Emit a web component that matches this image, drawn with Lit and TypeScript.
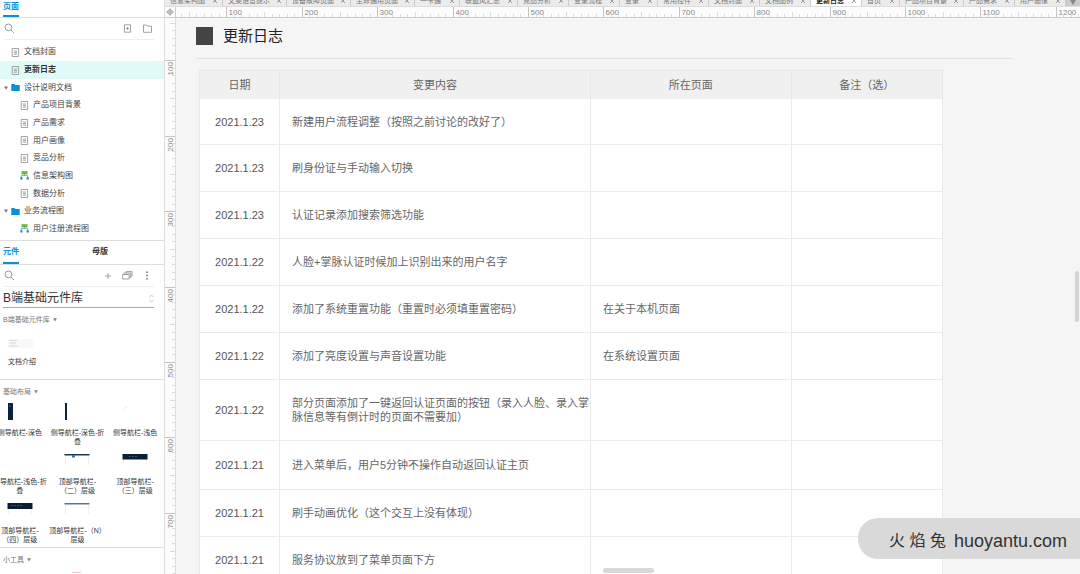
import { LitElement, html, svg, css } from "lit";
import { customElement, property, state } from "lit/decorators.js";
import { classMap } from "lit/directives/class-map.js";
import { styleMap } from "lit/directives/style-map.js";

const fontStack = css`"Liberation Sans", "Noto Sans CJK SC", sans-serif`;

const reset = css`
  *, *::before, *::after { box-sizing: border-box; }
  button, select, input {
    margin: 0; padding: 0; border: 0; background: none; color: inherit;
    font: inherit; appearance: none; text-align: left;
  }
  svg { display: block; flex: none; }
`;

const searchIcon = html`<svg width="11" height="11" viewBox="0 0 11 11" fill="none" stroke="#999" stroke-width="1"><circle cx="4.4" cy="4.4" r="3.4"/><path d="M7 7l3 3"/></svg>`;

const pageIcon = svg`<svg width="9" height="9" viewBox="0 0 9 9" fill="none" stroke="#8d8d8d" stroke-width=".8"><path d="M1.2.5h6.4v8H1.200z"/><path d="M2.800 3h3.200M2.800 4.600h3.200M2.800 6.200h3.200"/></svg>`;
const folderIcon = svg`<svg width="9" height="9" viewBox="0 0 9 9" fill="#0b8fdc"><path d="M.3 1h3.200l.9 1h4.300v6H.3z"/></svg>`;
const flowIcon = svg`<svg width="9" height="10" viewBox="0 0 9 10" fill="none"><path d="M1.400 6.500V4.600h6.200v1.900M4.500 3v1.600" stroke="#4b9ed0" stroke-width=".8"/><path d="M1.500.2h6v3.200h-6z" fill="#6fb52c"/><path d="M.3 6.200h2.200v2.200H.3zM6.600 6.200h2.200v2.200H6.600z" fill="#1d87c9"/></svg>`;

type Node = { name: string; kind: "page" | "folder" | "flow"; level: number };
const pages: Node[] = [
  { name: "文档封面", kind: "page", level: 0 },
  { name: "更新日志", kind: "page", level: 0 },
  { name: "设计说明文档", kind: "folder", level: 0 },
  { name: "产品项目背景", kind: "page", level: 1 },
  { name: "产品需求", kind: "page", level: 1 },
  { name: "用户画像", kind: "page", level: 1 },
  { name: "竞品分析", kind: "page", level: 1 },
  { name: "信息架构图", kind: "flow", level: 1 },
  { name: "数据分析", kind: "page", level: 1 },
  { name: "业务流程图", kind: "folder", level: 0 },
  { name: "用户注册流程图", kind: "flow", level: 1 },
];

@customElement("page-panel")
class PagePanel extends LitElement {
  @state() selected = "更新日志";
  static styles = [reset, css`
    :host { display: block; border-bottom: 1px solid #ddd; color: #444; font-size: 8px; }
    .head { height: 18px; padding-left: 3px; border-bottom: 1px solid #ddd; display: flex; }
    .head h2 { margin: 0; height: 17px; font-size: 8px; line-height: 13px; color: #0b8fdc; border-bottom: 2px solid #0b8fdc; }
    .tools { display: flex; align-items: center; height: 22px; margin: 0 10px 0 4px; padding-right: 1px; border-bottom: 1px solid #eee; }
    .tools input { flex: 1; min-width: 0; }
    .tools button { margin-left: 10px; }
    .tree { list-style: none; margin: 0; padding: 3px 0 2px; }
    .tree li { height: 18px; }
    .tree li:nth-child(3n) { height: 17px; }
    .row { display: flex; align-items: center; width: 100%; height: 100%; padding-left: 4px; gap: 4px; line-height: 12px; }
    .row.child { padding-left: 13px; }
    .row.on { background: #e0faf7; font-weight: 700; color: #333; }
    .arrow { width: 3px; height: 12px; display: flex; align-items: center; }
  `];
  render() {
    const icons = { page: pageIcon, folder: folderIcon, flow: flowIcon };
    return html`
      <header class="head"><h2>页面</h2></header>
      <div class="tools">
        ${searchIcon}<input aria-label="搜索页面">
        <button aria-label="添加页面"><svg width="9" height="9" viewBox="0 0 9 9" fill="none" stroke="#999" stroke-width=".9"><path d="M1.500.8h6v7.400h-6zM4.500 3v3M3 4.500h3"/></svg></button>
        <button aria-label="添加文件夹"><svg width="11" height="9" viewBox="0 0 11 9" fill="none" stroke="#999" stroke-width=".9"><path d="M1.500 1h3l1 1.200h4V8.300h-8z"/></svg></button>
      </div>
      <ul class="tree">
        ${pages.map((p) => html`<li>
          <button class=${classMap({ row: true, child: p.level === 1, on: p.name === this.selected })} @click=${() => (this.selected = p.name)}>
            <span class="arrow">${p.kind === "folder" ? html`<svg width="4" height="4" viewBox="0 0 4 4" fill="#777"><path d="M0 .5h4L2 3.800z"/></svg>` : ""}</span>
            ${icons[p.kind]}<span>${p.name}</span>
          </button></li>`)}
      </ul>`;
  }
}

const navy = "#0b2140";
const side = (w: number) => svg`<path d="M1 0h${w}v17H1z" fill=${navy}/>`;
const frame = svg`<path d="M1.500 4v9M24.500 4v9" stroke="#eee" fill="none"/>`;
const thumbs = [
  { name: "侧导航栏-深色", art: svg`${side(5)}<path d="M2 3h2" stroke="#3f5f85"/>` },
  { name: "侧导航栏-深色-折\n叠", art: side(2) },
  { name: "侧导航栏-浅色", art: svg`<path d="M2 4h3M2 6h2" stroke="#eee"/>` },
  { name: "侧导航栏-浅色-折\n叠", art: svg`` },
  { name: "顶部导航栏-\n（二）层级", art: svg`${frame}<path d="M.5 2h25v1.500H.5z" fill="#24364f"/><path d="M8 3h3v2.500H8z" fill="#2c78b5"/>` },
  { name: "顶部导航栏-\n（三）层级", art: svg`${frame}<path d="M.5 2h25v5.500H.5z" fill="#0a1f33"/><path d="M7 4.500h8" stroke="#35536c" stroke-dasharray="2 1"/>` },
  { name: "顶部导航栏-\n（四）层级", art: svg`${frame}<path d="M.5 2h25v6H.5z" fill="#0a1f33"/><path d="M4 4.500h11" stroke="#35536c" stroke-dasharray="2 1"/>` },
  { name: "顶部导航栏-（N）\n层级", art: svg`${frame}<path d="M.5 2h25v1.500H.5z" fill="#5c7391"/>` },
];

@customElement("widget-panel")
class WidgetPanel extends LitElement {
  static styles = [reset, css`
    :host { display: block; color: #333; font-size: 7px; line-height: 9px; }
    .tabs { display: flex; height: 24px; padding-left: 3px; border-bottom: 1px solid #ddd; }
    .tabs button { height: 23px; font-size: 8px; line-height: 22px; font-weight: 700; border-bottom: 2px solid transparent; margin-right: 73px; white-space: nowrap; }
    .tabs .on { color: #0b8fdc; border-color: #0b8fdc; }
    .tools { display: flex; align-items: center; height: 22px; margin: 0 10px 0 4px; padding-right: 3px; border-bottom: 1px solid #eee; }
    .tools input { flex: 1; min-width: 0; }
    .tools button { margin-left: 10px; }
    .lib { display: flex; align-items: center; height: 21px; margin: 0 10px 0 3px; padding-top: 2px; border-bottom: 1px solid #aaa; }
    .lib select { flex: 1; font-size: 12px; line-height: 18px; color: #333; }
    .group { border-bottom: 1px solid #ddd; }
    .group h3 { display: flex; align-items: center; gap: 3px; margin: 0; padding-left: 3px; font-size: 7px; font-weight: 400; line-height: 23px; color: #777; }
    .doc { display: flex; flex-direction: column; gap: 8px; padding: 8px 0 13px 8px; }
    .grid { display: grid; grid-template-columns: repeat(3, 1fr); row-gap: 5px; margin: 0 0 2px -9px; }
    .cell { display: flex; flex-direction: column; align-items: center; gap: 7px; height: 44px; text-align: center; white-space: pre; line-height: 9px; }
    .cell span { display: block; }
    .more { padding-left: 71px; }
  `];
  head(t: string) {
    return html`<h3>${t}<svg width="4" height="4" viewBox="0 0 4 4" fill="#888"><path d="M0 .3h4L2 3.600z"/></svg></h3>`;
  }
  render() {
    return html`
      <nav class="tabs"><button class="on">元件</button><button>母版</button></nav>
      <div class="tools">
        ${searchIcon}<input aria-label="搜索元件">
        <button aria-label="添加"><svg width="8" height="8" viewBox="0 0 8 8" stroke="#999"><path d="M4 1v6M1 4h6" stroke-width=".9"/></svg></button>
        <button aria-label="元件库"><svg width="11" height="9" viewBox="0 0 11 9" fill="none" stroke="#888" stroke-width=".8"><path d="M.7 3.500h6.500v4.500H.7zM2.300 3.500V2h6.500v4.500H7.200M4 2V.6h6V5H8.800"/></svg></button>
        <button aria-label="更多"><svg width="8" height="9" viewBox="0 0 8 9" fill="#777"><circle cx="4" cy="1.200" r=".9"/><circle cx="4" cy="4.500" r=".9"/><circle cx="4" cy="7.800" r=".9"/></svg></button>
      </div>
      <div class="lib">
        <select aria-label="选择元件库"><option>B端基础元件库</option></select>
        <svg width="5" height="9" viewBox="0 0 5 9" fill="none" stroke="#bbb" stroke-width=".8"><path d="M.5 3L2.500 1l2 2M.5 6l2 2 2-2"/></svg>
      </div>
      <section class="group">
        ${this.head("B端基础元件库")}
        <div class="doc">
          <svg width="26" height="10" viewBox="0 0 26 10"><path d="M0 0h25v9H0z" fill="#f8f8f8"/><path d="M1 1.500h8M2 4h6M1 7h9" stroke="#d9d9d9"/></svg>
          <span>文档介绍</span>
        </div>
      </section>
      <section class="group">
        ${this.head("基础布局")}
        <div class="grid">
          ${thumbs.map((t) => html`<div class="cell"><svg width="26" height="18" viewBox="0 0 26 18">${t.art}</svg><span>${t.name}</span></div>`)}
        </div>
      </section>
      <section class="group">
        ${this.head("小工具")}
        <div class="more"><svg width="12" height="6" viewBox="0 0 12 6"><path d="M1 1.500h9" stroke="#f0c9cc"/></svg></div>
      </section>`;
  }
}

const STEP = 75.4;

@customElement("canvas-ruler")
class CanvasRuler extends LitElement {
  @property({ type: Boolean }) vertical = false;
  @property({ type: Number }) origin = 0;
  @state() length = 0;
  private observer = new ResizeObserver(() => this.measure());
  static styles = css`
    :host { display: block; overflow: hidden; background: #fcfcfc; min-width: 0; min-height: 0; }
    svg { display: block; width: 100%; height: 100%; }
    .label { font-size: 8px; fill: #888; }
  `;
  connectedCallback() {
    super.connectedCallback();
    this.observer.observe(this);
  }
  disconnectedCallback() {
    super.disconnectedCallback();
    this.observer.disconnect();
  }
  measure() {
    this.length = this.vertical ? this.clientHeight : this.clientWidth;
  }
  render() {
    const items = [];
    for (let i = 1; this.origin + (i * STEP) / 10 < this.length; i++) {
      const p = Math.round(this.origin + (i * STEP) / 10) + 0.5;
      if (p < 0) continue;
      const major = i % 10 === 0;
      const len = major ? 10 : i % 5 === 0 ? 5 : 3;
      const color = major ? "#c4c4c4" : "#dcdcdc";
      items.push(this.vertical
        ? svg`<path d="M${10 - len} ${p}h${len}" stroke=${color}/>`
        : svg`<path d="M${p} ${10 - len}v${len}" stroke=${color}/>`);
      if (major) {
        items.push(this.vertical
          ? svg`<text class="label" transform="translate(8 ${p + 15}) rotate(-90)">${i * 10}</text>`
          : svg`<text class="label" x=${p + 2} y="8">${i * 10}</text>`);
      }
    }
    return html`<svg>${items}</svg>`;
  }
}

const tabs = ["信息架构图", "文案语音提示", "设备故障页面", "生命通用页面", "一卡通", "联盟风汇总", "竞品分析", "登录流程", "登录", "常用控件", "文档封面", "文档图例", "更新日志", "首页", "产品项目背景", "产品需求", "用户画像"];

const logs = [
  ["2021.1.23", "新建用户流程调整（按照之前讨论的改好了）", ""],
  ["2021.1.23", "刷身份证与手动输入切换", ""],
  ["2021.1.23", "认证记录添加搜索筛选功能", ""],
  ["2021.1.22", "人脸+掌脉认证时候加上识别出来的用户名字", ""],
  ["2021.1.22", "添加了系统重置功能（重置时必须填重置密码）", "在关于本机页面"],
  ["2021.1.22", "添加了亮度设置与声音设置功能", "在系统设置页面"],
  ["2021.1.22", "部分页面添加了一键返回认证页面的按钮（录入人脸、录入掌脉信息等有倒计时的页面不需要加）", ""],
  ["2021.1.21", "进入菜单后，用户5分钟不操作自动返回认证主页", ""],
  ["2021.1.21", "刷手动画优化（这个交互上没有体现）", ""],
  ["2021.1.21", "服务协议放到了菜单页面下方", ""],
];

@customElement("app-root")
class AppRoot extends LitElement {
  @state() tab = "更新日志";
  static styles = [reset, css`
    :host {
      display: grid; grid-template-columns: 165px minmax(0, 1fr); height: 100vh; overflow: hidden;
      position: relative; background: #f5f5f5; font-family: ${fontStack};
    }
    .side { background: #fff; border-right: 1px solid #ddd; overflow: hidden; }
    .work { display: grid; grid-template: 7px 11px minmax(0, 1fr) / 11px minmax(0, 1fr); min-height: 0; }
    .tabs { grid-column: 1 / -1; display: flex; align-items: flex-end; overflow: hidden; background: #e8e8e8; border-bottom: 1px solid #ddd; }
    .tab { display: flex; align-items: center; flex: none; height: 11px; padding: 0 4px 0 5px; border-right: 1px solid #ccc; background: #ebebeb; color: #777; font-size: 7px; line-height: 10px; }
    .tab.on { background: #fff; color: #222; font-weight: 700; }
    .tab .name { flex: 1; white-space: nowrap; }
    .add { flex: 1; height: 11px; display: flex; align-items: flex-end; justify-content: center; background: #ccc; }
    .corner { display: flex; align-items: center; justify-content: center; background: #fcfcfc; border: solid #ccc; border-width: 0 1px 1px 0; }
    .h { border-bottom: 1px solid #ccc; }
    .v { border-right: 1px solid #ddd; }
    .canvas { overflow: hidden; padding: 8px 67px 0 20px; }
    .title { display: flex; align-items: center; gap: 10px; height: 33px; padding-bottom: 12px; border-bottom: 1px solid #e2e2e2; }
    .title i { width: 17px; height: 18px; background: #444; }
    .title h1 { margin: 0; font-size: 15px; line-height: 20px; font-weight: 400; color: #222; }
    .log { width: calc(100% - 73px); margin: 11px 0 0 3px; table-layout: fixed; border-collapse: separate; border-spacing: 0; border: solid #e8e8e8; border-width: 1px 0 0 1px; font-size: 11px; line-height: 14px; color: #666; background: #fff; }
    .log th { height: 28px; padding: 0 0 1px; font-weight: 400; background: #f0f0f0; border-right: 1px solid #e8e8e8; }
    .log td { height: 47px; padding: 0 0 0 12px; border: solid #ebebeb; border-width: 0 1px 1px 0; }
    .log td:first-child { padding: 0; text-align: center; color: #555; }
    .log tbody tr:first-child td { height: 46px; }
    .log .long td { height: 61px; }
    .log .long + tr td { height: 49px; }
    .c1 { width: 80px; }
    .c2 { width: 311px; }
    .c3 { width: 27%; }
    .bar-v { position: absolute; right: 1px; top: 271px; width: 4px; height: 51px; border-radius: 2px; background: #d4d4d4; }
    .bar-h { position: absolute; left: 603px; bottom: 1px; width: 51px; height: 5px; border-radius: 2px; background: #d9d9d9; }
    .brand { position: absolute; right: 0; bottom: 15px; height: 41px; padding: 4px 13px 0 31px; display: flex; align-items: center; gap: 8px; border-radius: 20px 0 0 20px; background: #d9d9d9; color: #333; white-space: nowrap; font-size: 16px; line-height: 26px; }
    .brand .site { font-family: "Liberation Sans", sans-serif; font-size: 18px; }
  `];
  render() {
    return html`
      <aside class="side"><page-panel></page-panel><widget-panel></widget-panel></aside>
      <main class="work">
        <nav class="tabs">
          ${tabs.map((t) => html`<button class=${classMap({ tab: true, on: t === this.tab })} style=${styleMap({ width: `${Math.round(25 + 6.5 * t.length)}px` })} @click=${() => (this.tab = t)}>
            <span class="name">${t}</span><svg width="6" height="6" viewBox="0 0 6 6" stroke="#888" stroke-width=".8"><path d="M1 1l4 4M5 1L1 5"/></svg>
          </button>`)}
          <button class="add" aria-label="标签列表"><svg width="8" height="6" viewBox="0 0 8 6" fill="#888"><path d="M1 0h6L4 5z"/></svg></button>
        </nav>
        <div class="corner"><svg width="8" height="8" viewBox="0 0 8 8" fill="none" stroke="#888" stroke-width=".7"><circle cx="4" cy="4" r="2.300"/><path d="M4 .3v7.400M.3 4h7.400"/></svg></div>
        <canvas-ruler class="h" origin="-25"></canvas-ruler>
        <canvas-ruler class="v" vertical origin="-33"></canvas-ruler>
        <article class="canvas">
          <header class="title"><i></i><h1>更新日志</h1></header>
          <table class="log">
            <colgroup><col class="c1"><col class="c2"><col class="c3"><col></colgroup>
            <thead><tr><th>日期</th><th>变更内容</th><th>所在页面</th><th>备注（选）</th></tr></thead>
            <tbody>
              ${logs.map(([d, text, where]) => html`<tr class=${classMap({ long: text.length > 30 })}><td>${d}</td><td>${text}</td><td>${where}</td><td></td></tr>`)}
            </tbody>
          </table>
        </article>
      </main>
      <div class="bar-v"></div>
      <div class="bar-h"></div>
      <div class="brand"><span>火 焰 兔</span><span class="site">huoyantu.com</span></div>`;
  }
}
